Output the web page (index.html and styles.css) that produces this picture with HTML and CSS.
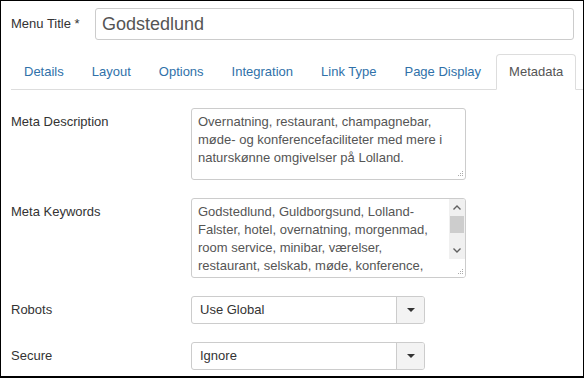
FILE: index.html
```html
<!DOCTYPE html>
<html lang="da">
<head>
    <meta charset="UTF-8">
    <title>Menu Item: Godstedlund</title>
    <link rel="stylesheet" href="styles.css">
</head>
<body>
    <div class="frame">
        <div class="title-row">
            <label class="title-label" for="menu_title">Menu Title *</label>
            <input type="text" id="menu_title" class="title-input" value="Godstedlund">
        </div>

        <ul class="nav-tabs">
            <li><a href="#details">Details</a></li>
            <li><a href="#layout">Layout</a></li>
            <li><a href="#options">Options</a></li>
            <li><a href="#integration">Integration</a></li>
            <li><a href="#linktype">Link Type</a></li>
            <li><a href="#pagedisplay">Page Display</a></li>
            <li class="active"><a href="#metadata">Metadata</a></li>
        </ul>

        <div class="tab-content">
            <div class="control-group">
                <div class="control-label">Meta Description</div>
                <div class="textarea desc">
                    <div class="textarea-text">
                        Overnatning, restaurant, champagnebar,<br>
                        møde- og konferencefaciliteter med mere i<br>
                        naturskønne omgivelser på Lolland.
                    </div>
                    <svg class="grip" width="8" height="8" viewBox="0 0 8 8">
                        <rect x="6" y="1" width="1" height="1"/>
                        <rect x="4" y="3" width="1" height="1"/>
                        <rect x="6" y="3" width="1" height="1"/>
                        <rect x="2" y="5" width="1" height="1"/>
                        <rect x="4" y="5" width="1" height="1"/>
                        <rect x="6" y="5" width="1" height="1"/>
                    </svg>
                </div>
            </div>

            <div class="control-group">
                <div class="control-label">Meta Keywords</div>
                <div class="textarea keywords">
                    <div class="textarea-text">
                        Godstedlund, Guldborgsund, Lolland-<br>
                        Falster, hotel, overnatning, morgenmad,<br>
                        room service, minibar, værelser,<br>
                        restaurant, selskab, møde, konference,
                    </div>
                    <div class="scrollbar">
                        <div class="scroll-btn">
                            <svg width="8" height="5" viewBox="0 0 8 5"><polyline points="0.5,4.5 4,1 7.5,4.5"/></svg>
                        </div>
                        <div class="scroll-track"><div class="scroll-thumb"></div></div>
                        <div class="scroll-btn">
                            <svg width="8" height="5" viewBox="0 0 8 5"><polyline points="0.5,0.5 4,4 7.5,0.5"/></svg>
                        </div>
                        <div class="scroll-corner"></div>
                    </div>
                    <svg class="grip" width="8" height="8" viewBox="0 0 8 8">
                        <rect x="6" y="1" width="1" height="1"/>
                        <rect x="4" y="3" width="1" height="1"/>
                        <rect x="6" y="3" width="1" height="1"/>
                        <rect x="2" y="5" width="1" height="1"/>
                        <rect x="4" y="5" width="1" height="1"/>
                        <rect x="6" y="5" width="1" height="1"/>
                    </svg>
                </div>
            </div>

            <div class="control-group">
                <div class="control-label">Robots</div>
                <div class="select">
                    <span class="select-value">Use Global</span>
                    <span class="select-toggle"><b class="caret"></b></span>
                </div>
            </div>

            <div class="control-group">
                <div class="control-label">Secure</div>
                <div class="select">
                    <span class="select-value">Ignore</span>
                    <span class="select-toggle"><b class="caret"></b></span>
                </div>
            </div>
        </div>
    </div>
</body>
</html>
```

FILE: styles.css
```css
/* General */
* {
    box-sizing: border-box;
}

body {
    margin: 0;
    font-family: "Liberation Sans", Arial, sans-serif;
    font-size: 13px;
    line-height: 18px;
    color: #333;
    background: #fff;
}

.frame {
    width: 584px;
    height: 378px;
    border: 1px solid #000;
    border-bottom-width: 2px;
    padding: 7px 0 0 10px;
    overflow: hidden;
}

/* Title row */
.title-row {
    display: flex;
    align-items: center;
    padding-right: 9px;
}

.title-label {
    width: 84px;
    flex-shrink: 0;
}

.title-input {
    flex: 1;
    height: 32px;
    border: 1px solid #ccc;
    border-radius: 3px;
    padding: 0 6px;
    font-family: inherit;
    font-size: 18px;
    color: #555;
    outline: none;
}

/* Tabs */
.nav-tabs {
    display: flex;
    list-style: none;
    margin: 14px 0 0;
    padding: 0;
    border-bottom: 1px solid #ddd;
}

.nav-tabs li {
    margin-right: 2px;
}

.nav-tabs a {
    display: block;
    height: 36px;
    line-height: 34px;
    padding: 0 12px;
    margin-bottom: -1px;
    border: 1px solid transparent;
    border-radius: 4px 4px 0 0;
    color: #3071a9;
    text-decoration: none;
}

.nav-tabs .active a {
    color: #555;
    background: #fff;
    border-color: #ddd #ddd #fff;
}

/* Form rows */
.tab-content {
    padding-top: 18px;
}

.control-group {
    display: flex;
    margin-bottom: 18px;
}

.control-label {
    width: 180px;
    flex-shrink: 0;
    padding-top: 5px;
}

.textarea {
    position: relative;
    display: flex;
    width: 275px;
    border: 1px solid #ccc;
    border-radius: 3px;
    color: #555;
    overflow: hidden;
}

.textarea.desc {
    height: 72px;
}

.textarea.keywords {
    height: 80px;
}

.textarea-text {
    flex: 1;
    padding: 4px 6px;
    white-space: nowrap;
    overflow: hidden;
}

.grip {
    position: absolute;
    right: 1px;
    bottom: 1px;
    fill: #aaa;
}

/* Scrollbar of the keywords box */
.scrollbar {
    width: 16px;
    display: flex;
    flex-direction: column;
    flex-shrink: 0;
}

.scroll-btn {
    height: 17px;
    display: flex;
    align-items: center;
    justify-content: center;
    background: #f0f0f0;
}

.scroll-btn svg {
    fill: none;
    stroke: #606060;
    stroke-width: 1.4;
}

.scroll-track {
    height: 26px;
    background: #f0f0f0;
}

.scroll-thumb {
    height: 17px;
    margin: 0 1px;
    background: #cdcdcd;
}

.scroll-corner {
    flex: 1;
    background: #fff;
}

/* Selects */
.select {
    display: flex;
    width: 234px;
    height: 28px;
    border: 1px solid #ccc;
    border-radius: 3px;
    overflow: hidden;
}

.select-value {
    flex: 1;
    padding-left: 8px;
    line-height: 26px;
    color: #333;
}

.select-toggle {
    width: 28px;
    display: flex;
    align-items: center;
    justify-content: center;
    background: #f3f3f3;
    border-left: 1px solid #ccc;
}

.caret {
    width: 0;
    height: 0;
    border-top: 4px solid #333;
    border-left: 4px solid transparent;
    border-right: 4px solid transparent;
}
```
